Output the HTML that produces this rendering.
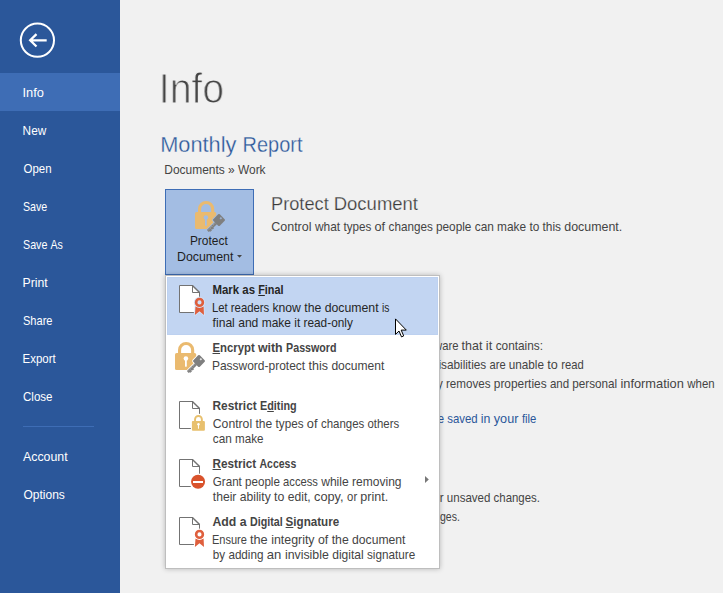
<!DOCTYPE html>
<html>
<head>
<meta charset="utf-8">
<title>Info</title>
<style>
*{box-sizing:border-box;margin:0;padding:0}
html,body{width:723px;height:593px;overflow:hidden;background:#f1f1f1}
body{font-family:"Liberation Sans",sans-serif;position:relative;color:#444}
.t{position:absolute;left:0;white-space:pre;line-height:1;transform-origin:0 0}
#side{position:absolute;left:0;top:0;width:120px;height:593px;background:#2b579a}
#sel{position:absolute;left:0;top:73px;width:120px;height:38px;background:#3e6db5}
.nav{color:#fff}
#sep{position:absolute;left:23px;top:426px;width:71px;height:1px;background:#3e6db5}
#btn{position:absolute;left:165px;top:189px;width:89px;height:86px;background:#a3bde3;border:1px solid #3e6db5}
#menu{position:absolute;left:165px;top:275px;width:275px;height:294px;background:#fff;border:1px solid #bebebe;box-shadow:0 0 5px rgba(0,0,0,.24)}
#hl{position:absolute;left:167px;top:277px;width:271px;height:58px;background:#c2d5f2;border:1px solid #bdd1f0}
.ttl{will-change:transform;color:#444;-webkit-text-stroke:1.1px #f1f1f1}
.docn{color:#2b579a;-webkit-text-stroke:.3px #f1f1f1}
.hd{color:#3a3a3a;-webkit-text-stroke:.25px #f1f1f1}
.bt{color:#1e1e1e}
.bg{color:#444}
.lnk{color:#2b579a}
.mt{font-weight:bold;color:#444}
.md{color:#444}
.hi{color:#262626}
u{text-decoration:underline;text-underline-offset:1px}
svg{position:absolute;overflow:visible}
</style>
</head>
<body>
<div id="side"></div>
<div id="sel"></div>
<svg id="back" style="left:19px;top:22px" width="36" height="36" viewBox="0 0 36 36">
  <circle cx="18.4" cy="18.2" r="16.6" fill="none" stroke="#fff" stroke-width="2"/>
  <path d="M27.7 18.3H11M17.5 12.1L11.2 18.3L17.5 24.5" fill="none" stroke="#fff" stroke-width="2.3"/>
</svg>
<div id="sep"></div>
<div id="btn"></div>
<svg id="ik1" style="left:193px;top:200px" width="32" height="32" viewBox="0 0 32 32">
  <path d="M6.55 12.6V9.1a6.55 6.55 0 0 1 13.1 0V12.6" fill="none" stroke="#eaba6f" stroke-width="3.1"/>
  <rect x="2" y="12" width="21.2" height="17" rx="1.6" fill="#eaba6f"/>
  <circle cx="12.9" cy="17.5" r="2.3" fill="#a3bde3"/>
  <rect x="12" y="18" width="1.8" height="7.8" rx=".9" fill="#a3bde3"/>
  <g transform="translate(26 20) rotate(45)">
    <rect x="0" y="-2" width="12" height="19" fill="#a3bde3"/>
    <g fill="#a3bde3" stroke="#a3bde3" stroke-width="1.6">
      <rect x="-4.6" y="-4.6" width="9.2" height="9.2" rx="1.2"/>
      <rect x="-1.4" y="4" width="2.8" height="11.8" rx=".8"/>
    </g>
    <rect x="-4.6" y="-4.6" width="9.2" height="9.2" rx="1.2" fill="#7f7f7f"/>
    <rect x="-1.4" y="4" width="2.8" height="11.8" rx=".8" fill="#7f7f7f"/>
    <rect x="1" y="9.4" width="1.3" height="1.8" fill="#7f7f7f"/>
    <rect x="1" y="12.2" width="1.3" height="2.2" fill="#7f7f7f"/>
    <path d="M-.4 5.4V14.8" stroke="#d8d8d8" stroke-width=".6" stroke-dasharray="1 .8" fill="none"/>
    <rect x="-.9" y="-3.5" width="1.8" height="1.8" fill="#a3bde3" opacity=".8"/>
  </g>
</svg>
<svg id="dd" style="left:237px;top:255px" width="6" height="4" viewBox="0 0 6 4"><path d="M0 0H5L2.5 2.8Z" fill="#444"/></svg>
<span class="t nav" id="n1" style="top:86px;font-size:13px;transform:translateX(22.51px) scaleX(0.9876)">Info</span>
<span class="t nav" id="n2" style="top:124px;font-size:13px;transform:translateX(22.59px) scaleX(0.9095)">New</span>
<span class="t nav" id="n3" style="top:162px;font-size:13px;transform:translateX(23.50px) scaleX(0.8805)">Open</span>
<span class="t nav" id="n4" style="top:200px;font-size:13px;transform:translateX(23.00px) scaleX(0.8197)">Save</span>
<span class="t nav" id="n5" style="top:238px;font-size:13px;transform:translateX(23.00px) scaleX(0.8242)">Save</span>
<span class="t nav" style="top:238px;font-size:13px;transform:translateX(50.40px) scaleX(0.8168)">As</span>
<span class="t nav" id="n6" style="top:276px;font-size:13px;transform:translateX(22.46px) scaleX(0.9419)">Print</span>
<span class="t nav" id="n7" style="top:314px;font-size:13px;transform:translateX(23.00px) scaleX(0.8503)">Share</span>
<span class="t nav" id="n8" style="top:352px;font-size:13px;transform:translateX(22.52px) scaleX(0.8820)">Export</span>
<span class="t nav" id="n9" style="top:390px;font-size:13px;transform:translateX(23.00px) scaleX(0.8877)">Close</span>
<span class="t nav" id="n10" style="top:450px;font-size:13px;transform:translateX(23.00px) scaleX(0.9502)">Account</span>
<span class="t nav" id="n11" style="top:488px;font-size:13px;transform:translateX(23.40px) scaleX(0.9249)">Options</span>
<span class="t ttl" id="title" style="top:68px;font-size:42px;transform:translateX(158.81px) scaleX(0.9316)">Info</span>
<span class="t docn" id="doc" style="top:134px;font-size:22px;transform:translateX(160.21px) scaleX(0.9898)">Monthly</span>
<span class="t docn" style="top:134px;font-size:22px;transform:translateX(242.59px) scaleX(0.9073)">Report</span>
<span class="t bg" id="path" style="top:163px;font-size:13px;transform:translateX(164.28px) scaleX(0.9192)">Documents »</span>
<span class="t bg" style="top:163px;font-size:13px;transform:translateX(238.00px) scaleX(0.9152)">Work</span>
<span class="t bt" id="b1" style="top:234px;font-size:13px;transform:translateX(189.88px) scaleX(0.9194)">Protect</span>
<span class="t bt" id="b2" style="top:250px;font-size:13px;transform:translateX(176.95px) scaleX(0.9516)">Document</span>
<span class="t hd" id="h1" style="top:194px;font-size:19px;transform:translateX(271.04px) scaleX(0.9577)">Protect</span>
<span class="t hd" style="top:194px;font-size:19px;transform:translateX(333.73px) scaleX(0.9732)">Document</span>
<span class="t bg" id="h2" style="top:220px;font-size:13px;transform:translateX(271.20px) scaleX(0.9614)">Control</span>
<span class="t bg" style="top:220px;font-size:13px;transform:translateX(314.92px) scaleX(0.9167)">what</span>
<span class="t bg" style="top:220px;font-size:13px;transform:translateX(343.40px) scaleX(0.8967)">types</span>
<span class="t bg" style="top:220px;font-size:13px;transform:translateX(374.50px) scaleX(0.9755)">of</span>
<span class="t bg" style="top:220px;font-size:13px;transform:translateX(388.60px) scaleX(0.8984)">changes</span>
<span class="t bg" style="top:220px;font-size:13px;transform:translateX(436.00px) scaleX(0.9074)">people</span>
<span class="t bg" style="top:220px;font-size:13px;transform:translateX(474.70px) scaleX(0.9118)">can make to this</span>
<span class="t bg" style="top:220px;font-size:13px;transform:translateX(564.30px) scaleX(0.9536)">document.</span>
<span class="t bg" id="g1" style="top:339px;font-size:13px;transform:translateX(434.07px) scaleX(0.8660)">ware</span>
<span class="t bg" style="top:339px;font-size:13px;transform:translateX(461.60px) scaleX(0.9567)">that</span>
<span class="t bg" style="top:339px;font-size:13px;transform:translateX(485.80px) scaleX(0.9791)">it</span>
<span class="t bg" style="top:339px;font-size:13px;transform:translateX(495.70px) scaleX(0.9082)">contains:</span>
<span class="t bg" id="g2" style="top:358px;font-size:13px;transform:translateX(438.38px) scaleX(0.9071)">isabilities</span>
<span class="t bg" style="top:358px;font-size:13px;transform:translateX(489.50px) scaleX(0.8571)">are</span>
<span class="t bg" style="top:358px;font-size:13px;transform:translateX(508.70px) scaleX(0.9027)">unable</span>
<span class="t bg" style="top:358px;font-size:13px;transform:translateX(547.20px) scaleX(0.9686)">to</span>
<span class="t bg" style="top:358px;font-size:13px;transform:translateX(561.20px) scaleX(0.8647)">read</span>
<span class="t bg" id="g3" style="top:377px;font-size:13px;transform:translateX(436.96px) scaleX(0.8941)">y removes</span>
<span class="t bg" style="top:377px;font-size:13px;transform:translateX(493.80px) scaleX(0.9134)">properties</span>
<span class="t bg" style="top:377px;font-size:13px;transform:translateX(549.90px) scaleX(0.8853)">and</span>
<span class="t bg" style="top:377px;font-size:13px;transform:translateX(572.30px) scaleX(0.8994)">personal</span>
<span class="t bg" style="top:377px;font-size:13px;transform:translateX(620.40px) scaleX(0.9863)">information</span>
<span class="t bg" style="top:377px;font-size:13px;transform:translateX(687.28px) scaleX(0.8792)">when</span>
<span class="t lnk" id="g4" style="top:412px;font-size:13px;transform:translateX(437.69px) scaleX(0.8772)">e saved</span>
<span class="t lnk" style="top:412px;font-size:13px;transform:translateX(480.80px) scaleX(0.9468)">in</span>
<span class="t lnk" style="top:412px;font-size:13px;transform:translateX(493.80px) scaleX(0.9723)">your</span>
<span class="t lnk" style="top:412px;font-size:13px;transform:translateX(521.90px) scaleX(0.8665)">file</span>
<span class="t bg" id="g5" style="top:491px;font-size:13px;transform:translateX(439.76px) scaleX(0.8870)">r unsaved</span>
<span class="t bg" style="top:491px;font-size:13px;transform:translateX(493.60px) scaleX(0.8782)">changes.</span>
<span class="t bg" id="g6" style="top:510px;font-size:13px;transform:translateX(440.00px) scaleX(0.8097)">ges.</span>
<div id="menu"></div>
<div id="hl"></div>
<svg id="i1" style="left:174px;top:282px" width="32" height="34" viewBox="0 0 32 34">
  <path d="M18.5 3.5H5.5V30.5H25.5V10.5Z" fill="#fff"/><path d="M25.5 14.8V10.5M18.5 3.5H5.5V30.5H19.9M18.5 3V10.5H26" fill="none" stroke="#737373" stroke-width="1"/><path d="M18.4 3.4L25.6 10.6" fill="none" stroke="#737373" stroke-width="1.45"/>
  <path d="M21.5 24.6H29.6L30 33L25.5 29.2L20.9 33Z" fill="#d2e1f7" stroke="#d2e1f7" stroke-width="1.6" stroke-linejoin="round"/>
  <path d="M21.5 24.6H29.6L30 33L25.5 29.2L20.9 33Z" fill="#df5f3d"/>
  <circle cx="25.5" cy="20.4" r="5.6" fill="#d2e1f7"/>
  <circle cx="25.5" cy="20.4" r="3.35" fill="none" stroke="#df5f3d" stroke-width="2.6"/>
</svg>
<svg id="i2" style="left:173px;top:341px" width="32" height="32" viewBox="0 0 32 32">
  <path d="M6.55 12.6V9.1a6.55 6.55 0 0 1 13.1 0V12.6" fill="none" stroke="#eaba6f" stroke-width="3.1"/>
  <rect x="2" y="12" width="21.2" height="17" rx="1.6" fill="#eaba6f"/>
  <circle cx="12.9" cy="17.5" r="2.3" fill="#fff"/>
  <rect x="12" y="18" width="1.8" height="7.8" rx=".9" fill="#fff"/>
  <g transform="translate(26 20) rotate(45)">
    <rect x="0" y="-2" width="12" height="19" fill="#fff"/>
    <g fill="#fff" stroke="#fff" stroke-width="1.6">
      <rect x="-4.6" y="-4.6" width="9.2" height="9.2" rx="1.2"/>
      <rect x="-1.4" y="4" width="2.8" height="11.8" rx=".8"/>
    </g>
    <rect x="-4.6" y="-4.6" width="9.2" height="9.2" rx="1.2" fill="#7f7f7f"/>
    <rect x="-1.4" y="4" width="2.8" height="11.8" rx=".8" fill="#7f7f7f"/>
    <rect x="1" y="9.4" width="1.3" height="1.8" fill="#7f7f7f"/>
    <rect x="1" y="12.2" width="1.3" height="2.2" fill="#7f7f7f"/>
    <path d="M-.4 5.4V14.8" stroke="#d8d8d8" stroke-width=".6" stroke-dasharray="1 .8" fill="none"/>
    <rect x="-.9" y="-3.5" width="1.8" height="1.8" fill="#fff" opacity=".8"/>
  </g>
</svg>
<svg id="i3" style="left:174px;top:398px" width="32" height="34" viewBox="0 0 32 34">
  <path d="M18.5 3.5H5.5V30.5H25.5V10.5Z" fill="#fff"/><path d="M25.5 15.85V10.5M18.5 3.5H5.5V30.5H16.9M18.5 3V10.5H26" fill="none" stroke="#737373" stroke-width="1"/><path d="M18.4 3.4L25.6 10.6" fill="none" stroke="#737373" stroke-width="1.45"/>
  <path d="M21.05 23.4V21.3a3.4 3.4 0 0 1 6.8 0V23.4" fill="none" stroke="#e8c06e" stroke-width="1.95"/>
  <rect x="17.9" y="22.9" width="13" height="9.95" rx="1" fill="#e8c06e"/>
  <circle cx="24.45" cy="26.25" r="1.2" fill="#fff"/>
  <rect x="23.95" y="26.4" width="1" height="4.4" rx=".4" fill="#fff"/>
</svg>
<svg id="i4" style="left:174px;top:456px" width="32" height="34" viewBox="0 0 32 34">
  <path d="M18.5 3.5H5.5V30.5H25.5V10.5Z" fill="#fff"/><path d="M25.5 17.7V10.5M18.5 3.5H5.5V30.5H16.8M18.5 3V10.5H26" fill="none" stroke="#737373" stroke-width="1"/><path d="M18.4 3.4L25.6 10.6" fill="none" stroke="#737373" stroke-width="1.45"/>
  <circle cx="24.06" cy="25.8" r="7" fill="#d9532c"/>
  <rect x="19" y="25" width="10" height="2" fill="#fff"/>
</svg>
<svg id="i5" style="left:174px;top:514px" width="32" height="34" viewBox="0 0 32 34">
  <path d="M18.5 3.5H5.5V30.5H25.5V10.5Z" fill="#fff"/><path d="M25.5 14.8V10.5M18.5 3.5H5.5V30.5H19.9M18.5 3V10.5H26" fill="none" stroke="#737373" stroke-width="1"/><path d="M18.4 3.4L25.6 10.6" fill="none" stroke="#737373" stroke-width="1.45"/>
  <path d="M21.5 24.6H29.6L30 33L25.5 29.2L20.9 33Z" fill="#fff" stroke="#fff" stroke-width="1.6" stroke-linejoin="round"/>
  <path d="M21.5 24.6H29.6L30 33L25.5 29.2L20.9 33Z" fill="#df5f3d"/>
  <circle cx="25.5" cy="20.4" r="5.6" fill="#fff"/>
  <circle cx="25.5" cy="20.4" r="3.35" fill="none" stroke="#df5f3d" stroke-width="2.6"/>
</svg>
<span class="t mt hi" id="m1" style="top:283px;font-size:13px;transform:translateX(212.50px) scaleX(0.8783)">Mark as</span>
<span class="t mt hi" style="top:283px;font-size:13px;transform:translateX(258.20px) scaleX(0.8344)"><u>F</u>inal</span>
<span class="t md hi" id="m1a" style="top:301px;font-size:13px;transform:translateX(211.93px) scaleX(0.8717)">Let readers</span>
<span class="t md hi" style="top:301px;font-size:13px;transform:translateX(272.40px) scaleX(0.9393)">know</span>
<span class="t md hi" style="top:301px;font-size:13px;transform:translateX(304.30px) scaleX(0.9408)">the</span>
<span class="t md hi" style="top:301px;font-size:13px;transform:translateX(324.70px) scaleX(0.9439)">document</span>
<span class="t md hi" style="top:301px;font-size:13px;transform:translateX(382.00px) scaleX(0.7888)">is</span>
<span class="t md hi" id="m1b" style="top:316px;font-size:13px;transform:translateX(212.60px) scaleX(0.9306)">final and</span>
<span class="t md hi" style="top:316px;font-size:13px;transform:translateX(261.70px) scaleX(0.9209)">make</span>
<span class="t md hi" style="top:316px;font-size:13px;transform:translateX(294.30px) scaleX(0.9098)">it</span>
<span class="t md hi" style="top:316px;font-size:13px;transform:translateX(303.50px) scaleX(0.9105)">read-only</span>
<span class="t mt" id="m2" style="top:341px;font-size:13px;transform:translateX(212.50px) scaleX(0.8723)"><u>E</u>ncrypt</span>
<span class="t mt" style="top:341px;font-size:13px;transform:translateX(257.95px) scaleX(0.9508)">with</span>
<span class="t mt" style="top:341px;font-size:13px;transform:translateX(286.10px) scaleX(0.8215)">Password</span>
<span class="t md" id="m2a" style="top:359px;font-size:13px;transform:translateX(211.88px) scaleX(0.9223)">Password-protect</span>
<span class="t md" style="top:359px;font-size:13px;transform:translateX(308.50px) scaleX(0.9605)">this</span>
<span class="t md" style="top:359px;font-size:13px;transform:translateX(331.40px) scaleX(0.9273)">document</span>
<span class="t mt" id="m3" style="top:399px;font-size:13px;transform:translateX(212.50px) scaleX(0.9131)">Restrict</span>
<span class="t mt" style="top:399px;font-size:13px;transform:translateX(260.00px) scaleX(0.8321)">E<u>d</u>iting</span>
<span class="t md" id="m3a" style="top:417px;font-size:13px;transform:translateX(212.80px) scaleX(0.9381)">Control</span>
<span class="t md" style="top:417px;font-size:13px;transform:translateX(255.50px) scaleX(0.9270)">the</span>
<span class="t md" style="top:417px;font-size:13px;transform:translateX(275.60px) scaleX(0.8996)">types</span>
<span class="t md" style="top:417px;font-size:13px;transform:translateX(306.80px) scaleX(0.9825)">of</span>
<span class="t md" style="top:417px;font-size:13px;transform:translateX(321.00px) scaleX(0.8813)">changes</span>
<span class="t md" style="top:417px;font-size:13px;transform:translateX(367.50px) scaleX(0.8763)">others</span>
<span class="t md" id="m3b" style="top:432px;font-size:13px;transform:translateX(212.80px) scaleX(0.9075)">can</span>
<span class="t md" style="top:432px;font-size:13px;transform:translateX(235.10px) scaleX(0.8936)">make</span>
<span class="t mt" id="m4" style="top:457px;font-size:13px;transform:translateX(212.50px) scaleX(0.9035)"><u>R</u>estrict</span>
<span class="t mt" style="top:457px;font-size:13px;transform:translateX(259.50px) scaleX(0.8078)">Access</span>
<span class="t md" id="m4a" style="top:475px;font-size:13px;transform:translateX(212.80px) scaleX(0.8924)">Grant people</span>
<span class="t md" style="top:475px;font-size:13px;transform:translateX(283.10px) scaleX(0.8614)">access</span>
<span class="t md" style="top:475px;font-size:13px;transform:translateX(321.13px) scaleX(0.9318)">while</span>
<span class="t md" style="top:475px;font-size:13px;transform:translateX(352.10px) scaleX(0.9242)">removing</span>
<span class="t md" id="m4b" style="top:490px;font-size:13px;transform:translateX(212.80px) scaleX(0.9323)">their ability</span>
<span class="t md" style="top:490px;font-size:13px;transform:translateX(274.10px) scaleX(0.9479)">to</span>
<span class="t md" style="top:490px;font-size:13px;transform:translateX(287.80px) scaleX(0.9296)">edit,</span>
<span class="t md" style="top:490px;font-size:13px;transform:translateX(314.00px) scaleX(0.9816)">copy,</span>
<span class="t md" style="top:490px;font-size:13px;transform:translateX(347.10px) scaleX(0.8701)">or</span>
<span class="t md" style="top:490px;font-size:13px;transform:translateX(360.30px) scaleX(0.9650)">print.</span>
<span class="t mt" id="m5" style="top:515px;font-size:13px;transform:translateX(212.50px) scaleX(0.9440)">Add a</span>
<span class="t mt" style="top:515px;font-size:13px;transform:translateX(250.00px) scaleX(0.8215)">Digital</span>
<span class="t mt" style="top:515px;font-size:13px;transform:translateX(285.60px) scaleX(0.8941)"><u>S</u>ignature</span>
<span class="t md" id="m5a" style="top:533px;font-size:13px;transform:translateX(211.95px) scaleX(0.8493)">Ensure</span>
<span class="t md" style="top:533px;font-size:13px;transform:translateX(250.00px) scaleX(0.9777)">the</span>
<span class="t md" style="top:533px;font-size:13px;transform:translateX(271.20px) scaleX(0.9526)">integrity</span>
<span class="t md" style="top:533px;font-size:13px;transform:translateX(318.00px) scaleX(0.9479)">of</span>
<span class="t md" style="top:533px;font-size:13px;transform:translateX(331.70px) scaleX(0.9408)">the</span>
<span class="t md" style="top:533px;font-size:13px;transform:translateX(352.10px) scaleX(0.9343)">document</span>
<span class="t md" id="m5b" style="top:548px;font-size:13px;transform:translateX(212.80px) scaleX(0.8985)">by adding</span>
<span class="t md" style="top:548px;font-size:13px;transform:translateX(266.70px) scaleX(1.0071)">an</span>
<span class="t md" style="top:548px;font-size:13px;transform:translateX(284.90px) scaleX(0.9488)">invisible</span>
<span class="t md" style="top:548px;font-size:13px;transform:translateX(332.20px) scaleX(0.9261)">digital</span>
<span class="t md" style="top:548px;font-size:13px;transform:translateX(367.00px) scaleX(0.9014)">signature</span>
<svg id="sub" style="left:425px;top:476px" width="5" height="8" viewBox="0 0 5 8"><path d="M0 0V7L3.8 3.5Z" fill="#777"/></svg>
<svg id="cur" style="left:395.3px;top:317.9px" width="13" height="20" viewBox="0 0 13 20"><path d="M.5 .9V16.4L4 13L6.5 18.9L8.7 17.9L6.2 12.1H11.3Z" fill="#fff" stroke="#000" stroke-width="1" stroke-linejoin="miter"/></svg>
</body>
</html>
